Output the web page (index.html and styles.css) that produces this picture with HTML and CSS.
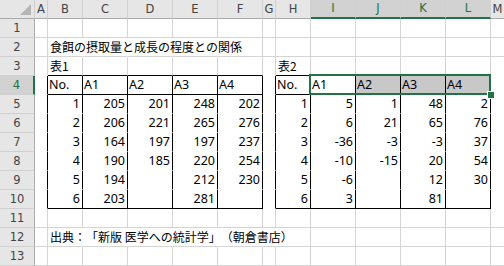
FILE: index.html
```html
<!DOCTYPE html>
<html lang="ja">
<head>
<meta charset="utf-8">
<title>Sheet</title>
<link rel="stylesheet" href="styles.css">
</head>
<body>
<div class="sheet">
  <div class="h corner"></div><div class="h">A</div><div class="h">B</div><div class="h">C</div><div class="h">D</div><div class="h">E</div><div class="h">F</div><div class="h">G</div><div class="h">H</div><div class="h hs">I</div><div class="h hs">J</div><div class="h hs">K</div><div class="h hs">L</div><div class="h m">M</div>

  <div class="rh">1</div><div class="c"></div><div class="c"></div><div class="c"></div><div class="c"></div><div class="c"></div><div class="c"></div><div class="c"></div><div class="c"></div><div class="c"></div><div class="c"></div><div class="c"></div><div class="c"></div><div class="c m"></div>

  <div class="rh">2</div><div class="c"></div><div class="c nr jp">食餌の摂取量と成長の程度との関係</div><div class="c nr"></div><div class="c nr"></div><div class="c nr"></div><div class="c"></div><div class="c"></div><div class="c"></div><div class="c"></div><div class="c"></div><div class="c"></div><div class="c"></div><div class="c m"></div>

  <div class="rh">3</div><div class="c nb"></div><div class="c kb jp">表1</div><div class="c kb"></div><div class="c kb"></div><div class="c kb"></div><div class="c kb"></div><div class="c nb"></div><div class="c kb jp">表2</div><div class="c kb"></div><div class="c kb"></div><div class="c kb"></div><div class="c kb"></div><div class="c m nb"></div>

  <div class="rh rhs">4</div><div class="c t"></div><div class="c tb">No.</div><div class="c tb">A1</div><div class="c tb">A2</div><div class="c tb">A3</div><div class="c tb">A4</div><div class="c t"></div><div class="c tb">No.</div><div class="c tb">A1</div><div class="c tb sel">A2</div><div class="c tb sel">A3</div><div class="c tb sel">A4</div><div class="c m nb"></div>

  <div class="rh">5</div><div class="c t"></div><div class="c t r">1</div><div class="c t r">205</div><div class="c t r">201</div><div class="c t r">248</div><div class="c t r">202</div><div class="c t"></div><div class="c t r">1</div><div class="c t r">5</div><div class="c t r">1</div><div class="c t r">48</div><div class="c t r">2</div><div class="c m nb"></div>

  <div class="rh">6</div><div class="c t"></div><div class="c t r">2</div><div class="c t r">206</div><div class="c t r">221</div><div class="c t r">265</div><div class="c t r">276</div><div class="c t"></div><div class="c t r">2</div><div class="c t r">6</div><div class="c t r">21</div><div class="c t r">65</div><div class="c t r">76</div><div class="c m nb"></div>

  <div class="rh">7</div><div class="c t"></div><div class="c t r">3</div><div class="c t r">164</div><div class="c t r">197</div><div class="c t r">197</div><div class="c t r">237</div><div class="c t"></div><div class="c t r">3</div><div class="c t r">-36</div><div class="c t r">-3</div><div class="c t r">-3</div><div class="c t r">37</div><div class="c m nb"></div>

  <div class="rh">8</div><div class="c t"></div><div class="c t r">4</div><div class="c t r">190</div><div class="c t r">185</div><div class="c t r">220</div><div class="c t r">254</div><div class="c t"></div><div class="c t r">4</div><div class="c t r">-10</div><div class="c t r">-15</div><div class="c t r">20</div><div class="c t r">54</div><div class="c m nb"></div>

  <div class="rh">9</div><div class="c t"></div><div class="c t r">5</div><div class="c t r">194</div><div class="c t r"></div><div class="c t r">212</div><div class="c t r">230</div><div class="c t"></div><div class="c t r">5</div><div class="c t r">-6</div><div class="c t r"></div><div class="c t r">12</div><div class="c t r">30</div><div class="c m nb"></div>

  <div class="rh">10</div><div class="c t"></div><div class="c tb r">6</div><div class="c tb r">203</div><div class="c tb r"></div><div class="c tb r">281</div><div class="c tb r"></div><div class="c t"></div><div class="c tb r">6</div><div class="c tb r">3</div><div class="c tb r"></div><div class="c tb r">81</div><div class="c tb r"></div><div class="c m nb"></div>

  <div class="rh">11</div><div class="c"></div><div class="c"></div><div class="c"></div><div class="c"></div><div class="c"></div><div class="c"></div><div class="c"></div><div class="c"></div><div class="c"></div><div class="c"></div><div class="c"></div><div class="c"></div><div class="c m"></div>

  <div class="rh">12</div><div class="c"></div><div class="c nr jp">出典：「新版 医学への統計学」（朝倉書店）</div><div class="c nr"></div><div class="c nr"></div><div class="c nr"></div><div class="c nr"></div><div class="c nr"></div><div class="c"></div><div class="c"></div><div class="c"></div><div class="c"></div><div class="c"></div><div class="c m"></div>

  <div class="rh">13</div><div class="c"></div><div class="c"></div><div class="c"></div><div class="c"></div><div class="c"></div><div class="c"></div><div class="c"></div><div class="c"></div><div class="c"></div><div class="c"></div><div class="c"></div><div class="c"></div><div class="c m"></div>

  <div class="selbox"></div>
  <div class="handle"></div>
</div>
</body>
</html>
```

FILE: styles.css
```css
html, body {
  margin: 0;
  padding: 0;
  background: #ffffff;
}

.sheet {
  position: relative;
  display: grid;
  grid-template-columns: 35px 13px 35px 45px 45px 45px 45px 13px 35px 45px 45px 45px 45px 13px;
  grid-template-rows: repeat(14, 19px);
  width: 504px;
  height: 266px;
  overflow: hidden;
  font-family: "Noto Sans", "Noto Sans CJK JP", sans-serif;
  font-size: 12.5px;
  color: #000;
}

/* column / row headers */
.h, .rh {
  box-sizing: border-box;
  background: #e6e6e6;
  color: #444;
  font-family: "DejaVu Sans", sans-serif;
  font-size: 11.5px;
  text-align: center;
  line-height: 18px;
  white-space: nowrap;
}

.h {
  border-right: 1px solid #d0d0d0;
  border-bottom: 1px solid #ababab;
}

.h.m {
  border-right: 0;
}

.hs {
  background: #d2d2d2;
  color: #217346;
  border-bottom: 2px solid #217346;
  line-height: 17px;
}

.rh {
  border-right: 1px solid #ababab;
  border-bottom: 1px solid #d0d0d0;
}

.rhs {
  background: #d2d2d2;
  color: #217346;
  border-right: 2px solid #217346;
}

.corner {
  position: relative;
}

.corner::after {
  content: "";
  position: absolute;
  right: 3px;
  bottom: 3px;
  width: 0;
  height: 0;
  border-left: 11px solid transparent;
  border-bottom: 11px solid #b4b4b4;
}

/* cells */
.c {
  box-sizing: border-box;
  min-width: 0;
  border-right: 1px solid #d4d4d4;
  border-bottom: 1px solid #d4d4d4;
  padding: 0 2px 0 1px;
  line-height: 18px;
  white-space: nowrap;
  overflow: visible;
}

.r { text-align: right; }
.nr { border-right-color: transparent; }
.nb { border-bottom-color: transparent; }
.kb { border-bottom-color: #000; }
.m { border-right: 0; }

.t {
  border-right-color: #000;
  border-bottom-color: transparent;
}

.tb {
  border-right-color: #000;
  border-bottom-color: #000;
}

.sel { background: #c8c8c8; }

.jp {
  font-family: "Noto Sans CJK JP", sans-serif;
  font-size: 12px;
  padding-left: 2px;
  text-spacing-trim: space-all;
  font-feature-settings: normal;
}

/* selection overlay */
.selbox {
  position: absolute;
  left: 309px;
  top: 74px;
  width: 182px;
  height: 21px;
  box-sizing: border-box;
  border: 2px solid #217346;
  pointer-events: none;
}

.handle {
  position: absolute;
  left: 487px;
  top: 91px;
  width: 8px;
  height: 8px;
  box-sizing: border-box;
  background: #217346;
  border: 1px solid #fff;
}
```
